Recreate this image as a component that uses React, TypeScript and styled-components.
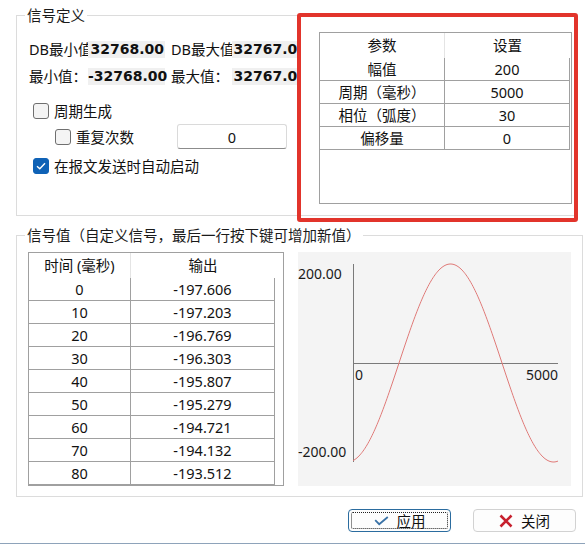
import React from 'react';
import styled, { createGlobalStyle, css } from 'styled-components';

const GlobalStyle = createGlobalStyle`
  html, body {
    margin: 0;
    padding: 0;
    background: #fff;
  }
  body {
    font-family: "Noto Sans", "Noto Sans CJK SC", sans-serif;
    color: #111;
  }
`;

const Window = styled.div`
  position: relative;
  width: 585px;
  height: 554px;
  box-sizing: border-box;
  padding-top: 6px;
  overflow: hidden;
  background: #fff;
  font-size: 14.5px;
  display: flex;
  flex-direction: column;
`;

const Group = styled.fieldset<{ $w: number; $h: number; $pad: string; $top?: number }>`
  box-sizing: border-box;
  width: ${(p) => p.$w}px;
  height: ${(p) => p.$h}px;
  min-width: 0;
  margin: ${(p) => p.$top || 0}px 0 0 16px;
  padding: ${(p) => p.$pad};
  border: 1px solid #dcdcdc;
`;

const GroupTitle = styled.legend<{ $shift: number }>`
  margin-left: ${(p) => p.$shift}px;
  padding: 0 2px;
  font-size: 14.5px;
  line-height: 18px;
  color: #1a1a1a;
`;

const GroupBody = styled.div<{ $gap: number }>`
  display: flex;
  gap: ${(p) => p.$gap}px;
`;

const LeftColumn = styled.div`
  width: 268px;
  flex-shrink: 0;
  overflow: hidden;
  padding-top: 9px;
  display: flex;
  flex-direction: column;
`;

const InfoRow = styled.div<{ $mt?: number }>`
  display: flex;
  align-items: center;
  height: 17px;
  margin-top: ${(p) => p.$mt || 0}px;
  white-space: nowrap;
`;

const InfoLabel = styled.span<{ $w: number; $ml?: number }>`
  width: ${(p) => p.$w}px;
  margin-left: ${(p) => p.$ml || 0}px;
  flex-shrink: 0;
  overflow: hidden;
  line-height: 17px;
`;

const InfoValue = styled.span<{ $w: number }>`
  width: ${(p) => p.$w}px;
  flex-shrink: 0;
  height: 17px;
  box-sizing: border-box;
  padding-right: 1px;
  background: #f0f0f0;
  font-family: "DejaVu Sans", sans-serif;
  font-weight: bold;
  font-size: 14px;
  line-height: 17px;
  text-align: right;
  color: #111;
`;

const CheckRow = styled.div<{ $h: number; $mt: number; $indent: number }>`
  display: flex;
  align-items: center;
  gap: 5px;
  height: ${(p) => p.$h}px;
  margin-top: ${(p) => p.$mt}px;
  padding-left: ${(p) => p.$indent}px;
  line-height: 18px;
`;

const Box = styled.span<{ $checked?: boolean }>`
  width: 16px;
  height: 16px;
  box-sizing: border-box;
  flex-shrink: 0;
  border-radius: 3px;
  display: flex;
  align-items: center;
  justify-content: center;
  ${(p) =>
    p.$checked
      ? css`
          background: #0f62b6;
          border: 1px solid #0f62b6;
        `
      : css`
          background: #f4f4f4;
          border: 1px solid #6f6f6f;
        `}
`;

const CheckText = styled.span`
  flex: 1;
`;

const RepeatField = styled.input`
  box-sizing: border-box;
  width: 110px;
  height: 25px;
  margin-right: 10px;
  border: 1px solid #dadada;
  border-bottom-color: #8c8c8c;
  border-radius: 3px;
  background: #fff;
  font: inherit;
  font-size: 14.5px;
  text-align: center;
  color: #111;
  outline: none;
`;

const Grid = styled.div<{ $w: number; $h: number }>`
  box-sizing: border-box;
  width: ${(p) => p.$w}px;
  height: ${(p) => p.$h}px;
  flex-shrink: 0;
  border: 1px solid #a0a0a0;
  background: #fff;
`;

const GridRow = styled.div<{ $cols: string; $head?: boolean }>`
  display: grid;
  grid-template-columns: ${(p) => p.$cols};
  height: ${(p) => (p.$head ? 25 : 23)}px;
`;

const Cell = styled.div<{ $head?: boolean; $last?: boolean }>`
  box-sizing: border-box;
  display: flex;
  align-items: center;
  justify-content: center;
  font-size: 14.5px;
  line-height: 1;
  color: #111;
  white-space: nowrap;
  ${(p) =>
    p.$head
      ? css`
          border-right: ${p.$last ? 'none' : '1px solid #e4e4e4'};
        `
      : css`
          border-right: 1px solid #a0a0a0;
          border-bottom: 1px solid #a0a0a0;
        `}
`;

const ChartBox = styled.div`
  width: 273px;
  height: 234px;
  flex-shrink: 0;
  background: #f4f4f4;

  svg {
    display: block;
  }
  text {
    font-family: "Noto Sans", sans-serif;
    font-size: 14px;
    fill: #1a1a1a;
  }
`;

const ButtonBar = styled.div`
  display: flex;
  justify-content: flex-end;
  gap: 22px;
  margin-top: 12px;
  padding-right: 9px;
`;

const Button = styled.button<{ $focused?: boolean }>`
  position: relative;
  box-sizing: border-box;
  width: 103px;
  height: 23px;
  padding: 0;
  display: flex;
  align-items: center;
  justify-content: center;
  gap: 8px;
  border-radius: 4px;
  border: 1px solid ${(p) => (p.$focused ? '#2b6c9f' : '#d2d2d2')};
  background: #fdfdfd;
  font: inherit;
  font-size: 14.5px;
  line-height: 18px;
  color: #111;
  ${(p) =>
    p.$focused &&
    css`
      &::after {
        content: '';
        position: absolute;
        inset: 2px;
        border: 1px dotted #222;
        border-radius: 2px;
      }
    `}
`;

const BottomRule = styled.div`
  height: 1px;
  margin-top: 11px;
  background: #8ea3ba;
`;

const Highlight = styled.div`
  position: absolute;
  left: 297px;
  top: 13px;
  width: 281px;
  height: 209px;
  box-sizing: border-box;
  border: 4px solid #e2342b;
  border-radius: 3px;
  pointer-events: none;
`;

const CheckBox: React.FC<{ checked?: boolean }> = ({ checked }) => (
  <Box $checked={checked}>
    {checked && (
      <svg width="10" height="8" viewBox="0 0 10 8">
        <path d="M1 4.2 L3.8 6.8 L9 1.2" fill="none" stroke="#fff" strokeWidth="1.4" />
      </svg>
    )}
  </Box>
);

const params = [
  ['幅值', '200'],
  ['周期（毫秒）', '5000'],
  ['相位（弧度）', '30'],
  ['偏移量', '0'],
];

const samples = [
  [0, '-197.606'],
  [10, '-197.203'],
  [20, '-196.769'],
  [30, '-196.303'],
  [40, '-195.807'],
  [50, '-195.279'],
  [60, '-194.721'],
  [70, '-194.132'],
  [80, '-193.512'],
];

// x axis spans 55..260 for 0..5000 ms, y axis 12..210 for +200..-200
const wave = Array.from({ length: 206 }, (_, i) => {
  const x = 55 + i;
  const y = 111 - 99 * Math.cos((2 * Math.PI * (x - 152.5)) / 206);
  return `${x},${y.toFixed(2)}`;
}).join(' ');

const WaveChart: React.FC = () => (
  <ChartBox>
    <svg width="273" height="234" viewBox="0 0 273 234">
      <line x1="55.5" y1="12" x2="55.5" y2="210" stroke="#7a7a7a" strokeWidth="1" />
      <line x1="55" y1="111.5" x2="260" y2="111.5" stroke="#7a7a7a" strokeWidth="1" />
      <polyline points={wave} fill="none" stroke="#e07a78" strokeWidth="1" />
      <text x="0" y="27">200.00</text>
      <text x="0" y="205">-200.00</text>
      <text x="57" y="128">0</text>
      <text x="260" y="128" textAnchor="end">5000</text>
    </svg>
  </ChartBox>
);

const App: React.FC = () => {
  return (
    <>
      <GlobalStyle />
      <Window>
        <Group $w={559} $h={210} $pad="8px 2px 0 12px">
          <GroupTitle $shift={-4}>信号定义</GroupTitle>
          <GroupBody $gap={22}>
            <LeftColumn>
              <InfoRow>
                <InfoLabel $w={59}>DB最小值</InfoLabel>
                <InfoValue $w={77}>32768.00</InfoValue>
                <InfoLabel $w={61} $ml={6}>DB最大值</InfoLabel>
                <InfoValue $w={76}>32767.00</InfoValue>
              </InfoRow>
              <InfoRow $mt={10}>
                <InfoLabel $w={59}>最小值：</InfoLabel>
                <InfoValue $w={77}>-32768.00</InfoValue>
                <InfoLabel $w={61} $ml={6}>最大值：</InfoLabel>
                <InfoValue $w={76}>32767.00</InfoValue>
              </InfoRow>
              <CheckRow $h={20} $mt={16} $indent={4}>
                <CheckBox />
                <CheckText>周期生成</CheckText>
              </CheckRow>
              <CheckRow $h={25} $mt={3} $indent={26}>
                <CheckBox />
                <CheckText>重复次数</CheckText>
                <RepeatField value="0" readOnly />
              </CheckRow>
              <CheckRow $h={20} $mt={7} $indent={4}>
                <CheckBox checked />
                <CheckText>在报文发送时自动启动</CheckText>
              </CheckRow>
            </LeftColumn>
            <Grid $w={253} $h={172}>
              <GridRow $cols="125px 125px" $head>
                <Cell $head>参数</Cell>
                <Cell $head $last>设置</Cell>
              </GridRow>
              {params.map(([name, value]) => (
                <GridRow key={name} $cols="125px 125px">
                  <Cell>{name}</Cell>
                  <Cell>{value}</Cell>
                </GridRow>
              ))}
            </Grid>
          </GroupBody>
        </Group>

        <Group $w={567} $h={271} $pad="8px 11px 0 11px" $top={10}>
          <GroupTitle $shift={-3}>信号值（自定义信号，最后一行按下键可增加新值）</GroupTitle>
          <GroupBody $gap={14}>
            <Grid $w={256} $h={234}>
              <GridRow $cols="102px 144px" $head>
                <Cell $head>时间 (毫秒)</Cell>
                <Cell $head $last>输出</Cell>
              </GridRow>
              {samples.map(([t, v]) => (
                <GridRow key={t} $cols="102px 144px">
                  <Cell>{t}</Cell>
                  <Cell>{v}</Cell>
                </GridRow>
              ))}
            </Grid>
            <WaveChart />
          </GroupBody>
        </Group>

        <ButtonBar>
          <Button $focused>
            <svg width="15" height="10" viewBox="0 0 15 10">
              <path d="M1.2 4.2 L5.2 8.2 L13.8 1" fill="none" stroke="#3a72a6" strokeWidth="1.8" />
            </svg>
            应用
          </Button>
          <Button>
            <svg width="14" height="14" viewBox="0 0 14 14">
              <path d="M1.5 1.5 L12.5 12.5 M12.5 1.5 L1.5 12.5" stroke="#c7202e" strokeWidth="2.6" />
            </svg>
            关闭
          </Button>
        </ButtonBar>
        <BottomRule />

        <Highlight />
      </Window>
    </>
  );
};

export default App;
